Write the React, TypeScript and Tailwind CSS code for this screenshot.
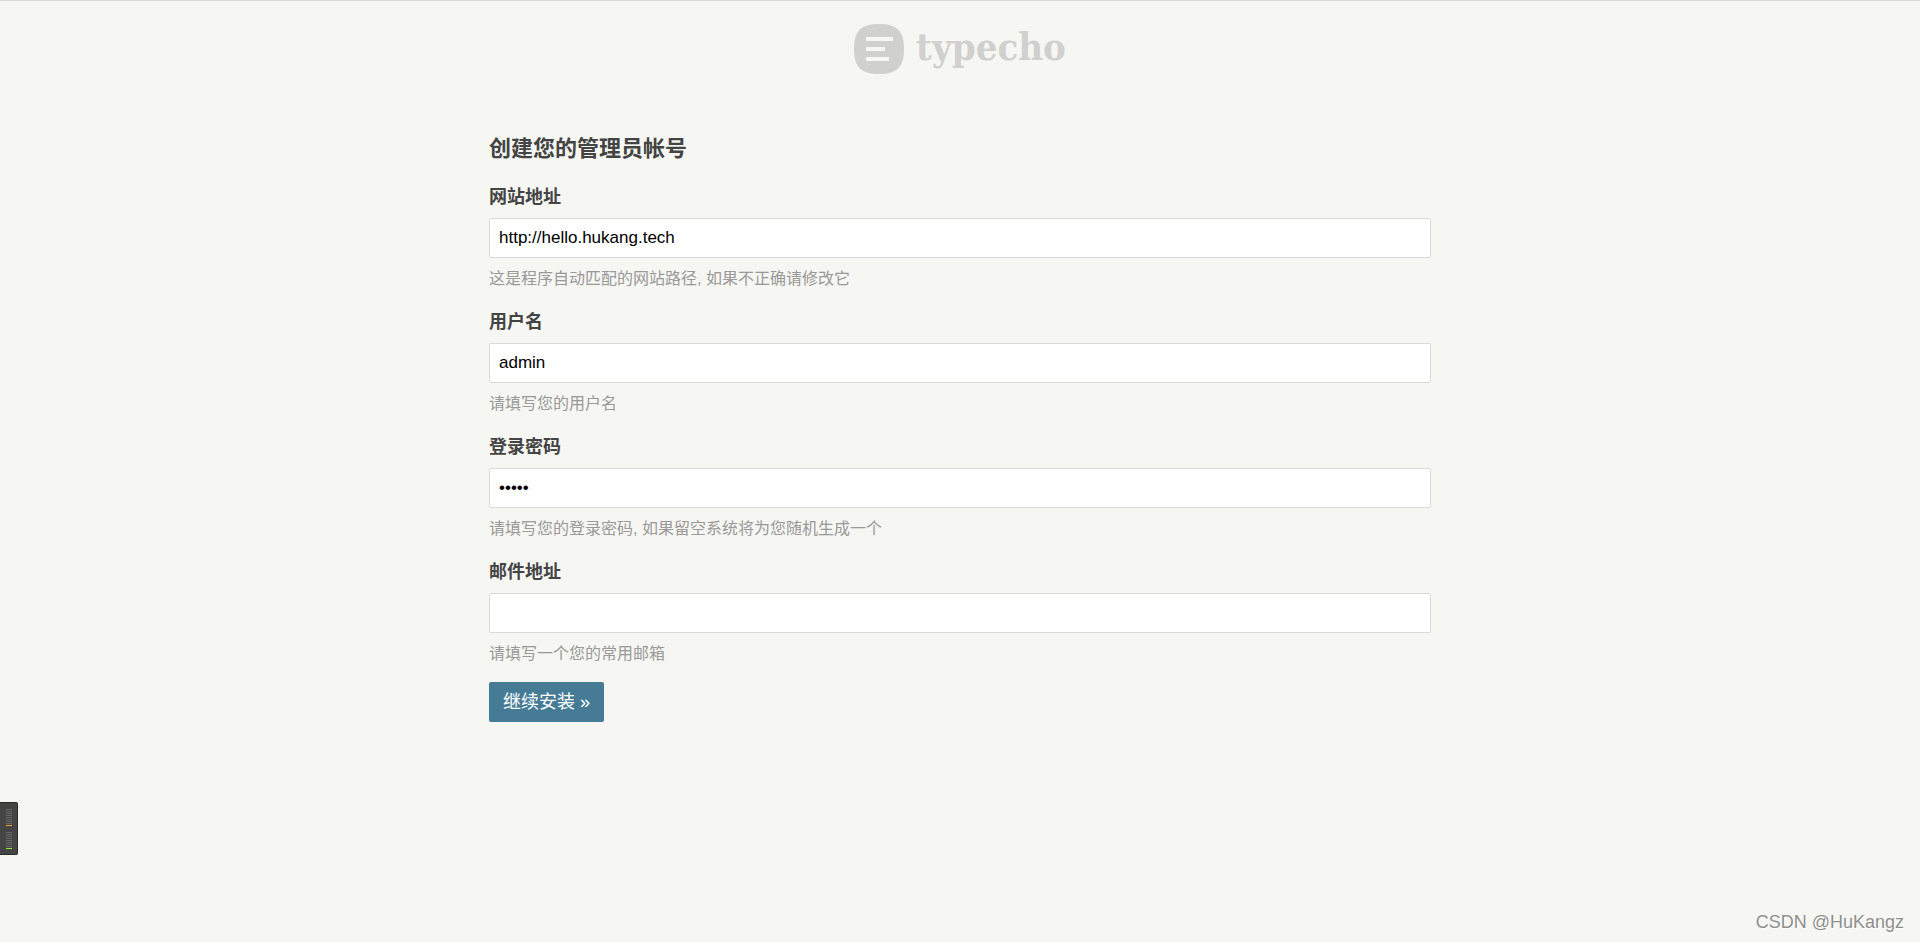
interface Field {
  name: string
  label: string
  type: string
  value: string
  description: string
}

const fields: Field[] = [
  {
    name: 'userUrl',
    label: '网站地址',
    type: 'text',
    value: 'http://hello.hukang.tech',
    description: '这是程序自动匹配的网站路径, 如果不正确请修改它',
  },
  { name: 'userName', label: '用户名', type: 'text', value: 'admin', description: '请填写您的用户名' },
  {
    name: 'userPassword',
    label: '登录密码',
    type: 'password',
    value: 'admin',
    description: '请填写您的登录密码, 如果留空系统将为您随机生成一个',
  },
  { name: 'userMail', label: '邮件地址', type: 'text', value: '', description: '请填写一个您的常用邮箱' },
]

function Logo() {
  return (
    <h1 className="flex items-center justify-center gap-3 text-[#d0d0ce]">
      <svg width="50" height="50" viewBox="0 0 50 50" aria-hidden="true">
        <path
          fill="currentColor"
          d="M25 0C43 0 50 7 50 25S43 50 25 50 0 43 0 25 7 0 25 0Z"
        />
        <path fill="#f6f6f2" d="M12 13h27v4H12zM12 23h19v4H12zM12 33h23v4H12z" />
      </svg>
      <span className="pb-1 font-['DejaVu_Serif_Condensed','DejaVu_Serif',serif] text-[38px] leading-[46px] font-bold">
        typecho
      </span>
    </h1>
  )
}

function Meter({ active }: { active: string }) {
  return (
    <div className="flex flex-col gap-px">
      {[0, 1, 2, 3, 4, 5, 6, 7].map(i => (
        <span key={i} className="h-px w-1.5 bg-[#666]" />
      ))}
      <span className={`h-px w-1.5 ${active}`} />
    </div>
  )
}

export default function App() {
  return (
    <div className="relative min-h-screen border-t border-[#d9d9d6] bg-[#f6f6f2] px-4 pt-[23px] font-['Liberation_Sans','Noto_Sans_CJK_SC',sans-serif] text-[#444]">
      <Logo />

      <main className="mx-auto mt-14 max-w-[942px]">
        <h2 className="text-[22px] leading-[38px] font-bold">创建您的管理员帐号</h2>

        <form className="mt-3.5" onSubmit={e => e.preventDefault()}>
          {fields.map(field => (
            <div key={field.name} className="mb-4">
              <label htmlFor={field.name} className="mb-1.5 block text-[18px] leading-[30px] font-bold">
                {field.label}
              </label>
              <input
                id={field.name}
                name={field.name}
                type={field.type}
                defaultValue={field.value}
                aria-describedby={`${field.name}-description`}
                className="block h-10 w-full rounded-xs border border-[#d9d9d6] bg-white px-[9px] text-[17px] text-black focus:outline-none"
              />
              <p id={`${field.name}-description`} className="mt-2 text-[16px] leading-[25px] text-[#999]">
                {field.description}
              </p>
            </div>
          ))}
          <button
            type="submit"
            className="block h-10 cursor-pointer rounded-xs bg-[#467b96] px-3.5 text-[18px] text-white"
          >
            继续安装 »
          </button>
        </form>
      </main>

      {/* level meter docked to the window edge */}
      <div className="absolute top-[801px] left-0 flex h-[53px] w-[18px] flex-col justify-center gap-1.5 rounded-r-xs border border-l-0 border-[#2b2b2b] bg-[#444] pl-1.5">
        <Meter active="bg-[#ffa62b]" />
        <Meter active="bg-[#8aee22]" />
      </div>

      <span className="absolute right-4 bottom-1.5 text-[18px] leading-7 text-[#8f8f8d] [text-shadow:1px_1px_0_#fff]">
        CSDN @HuKangz
      </span>
    </div>
  )
}
